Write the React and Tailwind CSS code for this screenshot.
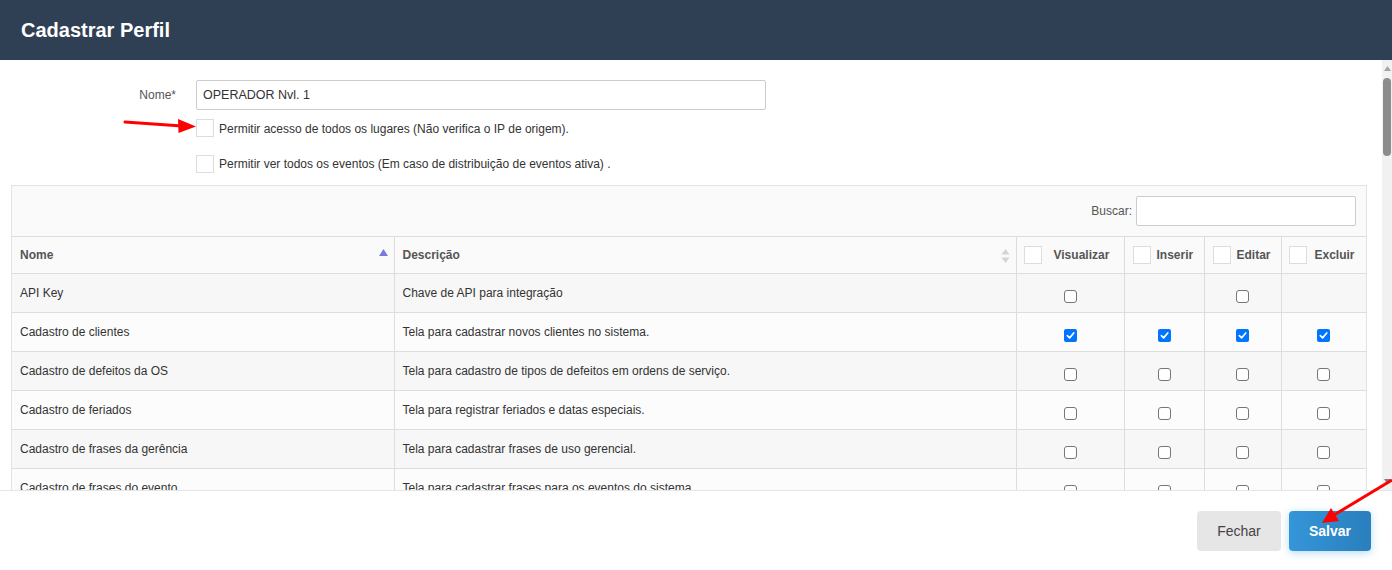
import React from "react";

const rows = [
  { n: "API Key", d: "Chave de API para integração", c: [false, null, false, null] },
  { n: "Cadastro de clientes", d: "Tela para cadastrar novos clientes no sistema.", c: [true, true, true, true] },
  { n: "Cadastro de defeitos da OS", d: "Tela para cadastro de tipos de defeitos em ordens de serviço.", c: [false, false, false, false] },
  { n: "Cadastro de feriados", d: "Tela para registrar feriados e datas especiais.", c: [false, false, false, false] },
  { n: "Cadastro de frases da gerência", d: "Tela para cadastrar frases de uso gerencial.", c: [false, false, false, false] },
  { n: "Cadastro de frases do evento", d: "Tela para cadastrar frases para os eventos do sistema.", c: [false, false, false, false] },
];

function Cb({ checked }) {
  if (checked === null) return null;
  if (checked)
    return (
      <span className="inline-flex w-[13px] h-[13px] rounded-[2px] bg-[#0075ff] items-center justify-center align-middle">
        <svg width="9" height="9" viewBox="0 0 10 10">
          <path d="M1.5 5.2 L4 7.6 L8.6 2.2" stroke="white" strokeWidth="1.9" fill="none" strokeLinecap="round" strokeLinejoin="round" />
        </svg>
      </span>
    );
  return <span className="inline-block w-[13px] h-[13px] rounded-[3px] border border-[#767676] bg-white align-middle" />;
}

function HeadBox() {
  return <span className="inline-block w-[18px] h-[18px] border border-[#dddddd] bg-white shrink-0" />;
}

export default function App() {
  return (
    <div className="relative w-[1392px] h-[570px] flex flex-col bg-white overflow-hidden text-[#333]" style={{ fontFamily: '"Liberation Sans", Arial, sans-serif' }}>
      <div className="h-[60px] bg-[#2f4054] flex items-center pl-[21px] shrink-0">
        <h1 className="text-white font-bold text-[20px]">Cadastrar Perfil</h1>
      </div>

      <div className="flex h-[430px] shrink-0">
        <div className="flex-1 overflow-hidden">
          <div className="pt-[20px]">
            <div className="flex items-center">
              <label className="w-[176px] text-right text-[12px] text-[#555]">Nome*</label>
              <div className="ml-[20px] w-[570px] h-[30px] border border-[#cccccc] rounded-[2px] flex items-center pl-[6px] text-[12.5px] text-[#333]">OPERADOR Nvl. 1</div>
            </div>
            <div className="flex items-center h-[18px] ml-[196px] mt-[9px]">
              <HeadBox />
              <span className="ml-[5px] text-[12px] leading-[18px] text-[#333] translate-y-[1px]">Permitir acesso de todos os lugares (Não verifica o IP de origem).</span>
            </div>
            <div className="flex items-center h-[18px] ml-[196px] mt-[18px]">
              <HeadBox />
              <span className="ml-[5px] text-[12px] leading-[18px] text-[#333]">Permitir ver todos os eventos (Em caso de distribuição de eventos ativa) .</span>
            </div>

            <div className="ml-[11px] w-[1356px] mt-[12px] border border-[#e3e3e3] bg-[#fafafa]">
              <div className="h-[50px] flex items-center justify-end pr-[10px]">
                <span className="text-[12px] text-[#555] mr-[4px]">Buscar:</span>
                <div className="w-[220px] h-[30px] border border-[#cccccc] rounded-[2px] bg-white" />
              </div>
              <table className="table-fixed border-collapse w-full text-[12px]">
                <colgroup>
                  <col className="w-[382px]" />
                  <col className="w-[622px]" />
                  <col className="w-[108px]" />
                  <col className="w-[80px]" />
                  <col className="w-[77px]" />
                  <col className="w-[85px]" />
                </colgroup>
                <thead>
                  <tr className="h-[37px] border-t border-b border-[#dddddd] text-[#555] font-bold">
                    <th className="text-left pl-[8px] font-bold relative">
                      Nome
                      <svg className="absolute right-[6px] top-[12px]" width="9" height="7" viewBox="0 0 9 7">
                        <path d="M4.5 0 L9 7 L0 7 Z" fill="#7a7ad9" />
                      </svg>
                    </th>
                    <th className="text-left pl-[8px] font-bold relative border-l border-[#dddddd]">
                      Descrição
                      <svg className="absolute right-[6px] top-[12px]" width="9" height="14" viewBox="0 0 9 14">
                        <path d="M4.5 0 L8.5 5.5 L0.5 5.5 Z" fill="#d4d4d4" />
                        <path d="M4.5 14 L8.5 8.5 L0.5 8.5 Z" fill="#d4d4d4" />
                      </svg>
                    </th>
                    <th className="border-l border-[#dddddd] pl-[7px]">
                      <div className="flex items-center"><HeadBox /><span className="ml-[12px]">Visualizar</span></div>
                    </th>
                    <th className="border-l border-[#dddddd] pl-[8px]">
                      <div className="flex items-center"><HeadBox /><span className="ml-[6px]">Inserir</span></div>
                    </th>
                    <th className="border-l border-[#dddddd] pl-[8px]">
                      <div className="flex items-center"><HeadBox /><span className="ml-[6px]">Editar</span></div>
                    </th>
                    <th className="border-l border-[#dddddd] pl-[7px]">
                      <div className="flex items-center"><HeadBox /><span className="ml-[8px]">Excluir</span></div>
                    </th>
                  </tr>
                </thead>
                <tbody>
                  {rows.map((r, i) => (
                    <tr key={i} className={"h-[39px] border-b border-[#dddddd] " + (i % 2 === 0 ? "bg-[#f7f7f7]" : "bg-[#fcfcfc]")}>
                      <td className="pl-[8px] text-[#333] whitespace-nowrap overflow-hidden">{r.n}</td>
                      <td className="pl-[8px] text-[#333] border-l border-[#dddddd] whitespace-nowrap overflow-hidden">{r.d}</td>
                      {r.c.map((c, j) => (
                        <td key={j} className="border-l border-[#dddddd] text-center pt-[6px]"><Cb checked={c} /></td>
                      ))}
                    </tr>
                  ))}
                </tbody>
              </table>
            </div>
          </div>
        </div>
        <div className="w-[10px] bg-[#f1f1f1] flex flex-col items-center shrink-0">
          <svg className="mt-[6px]" width="7" height="5" viewBox="0 0 7 5"><path d="M3.5 0 L7 5 L0 5 Z" fill="#a3a3a3" /></svg>
          <div className="mt-[7px] w-[8px] h-[78px] rounded-[4px] bg-[#8c8c8c]" />
          <div className="flex-1" />
          <svg className="mb-[6px]" width="7" height="5" viewBox="0 0 7 5"><path d="M0 0 L7 0 L3.5 5 Z" fill="#7f7f7f" /></svg>
        </div>
      </div>

      <div className="flex-1 border-t border-[#e5e5e5] flex justify-end items-start pt-[20px] pr-[21px] gap-[8px]">
        <button className="w-[84px] h-[40px] rounded-[4px] bg-[#e6e6e6] text-[14px] text-[#444]">Fechar</button>
        <button className="w-[82px] h-[40px] rounded-[4px] bg-gradient-to-r from-[#3596d9] to-[#2a7fbd] text-[14px] font-bold text-white shadow-[0_2px_8px_rgba(52,152,219,0.35)]">Salvar</button>
      </div>

      <svg className="absolute left-0 top-0 pointer-events-none" width="1392" height="570" viewBox="0 0 1392 570">
        <line x1="125" y1="122" x2="182" y2="126" stroke="#ff0000" strokeWidth="3" strokeLinecap="round" />
        <path d="M196 126.5 L178 119 L178.5 133 Z" fill="#ff0000" />
        <line x1="1392" y1="480" x2="1334" y2="515" stroke="#ff0000" strokeWidth="3" />
        <path d="M1322 523 L1331 508 L1339 521 Z" fill="#ff0000" />
      </svg>
    </div>
  );
}
